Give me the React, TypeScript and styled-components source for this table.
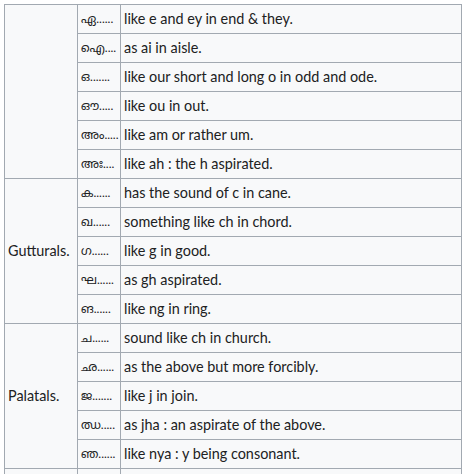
import React from 'react';
import styled, { createGlobalStyle } from 'styled-components';

type Row = { letter: string; sound: string };
type Group = { label: string; rows: Row[] };

const groups: Group[] = [
  {
    label: '',
    rows: [
      { letter: 'ഏ......', sound: 'like e and ey in end & they.' },
      { letter: 'ഐ....', sound: 'as ai in aisle.' },
      { letter: 'ഒ.......', sound: 'like our short and long o in odd and ode.' },
      { letter: 'ഔ.....', sound: 'like ou in out.' },
      { letter: 'അം.....', sound: 'like am or rather um.' },
      { letter: 'അഃ....', sound: 'like ah : the h aspirated.' },
    ],
  },
  {
    label: 'Gutturals.',
    rows: [
      { letter: 'ക......', sound: 'has the sound of c in cane.' },
      { letter: 'ഖ......', sound: 'something like ch in chord.' },
      { letter: 'ഗ......', sound: 'like g in good.' },
      { letter: 'ഘ......', sound: 'as gh aspirated.' },
      { letter: 'ങ......', sound: 'like ng in ring.' },
    ],
  },
  {
    label: 'Palatals.',
    rows: [
      { letter: 'ച......', sound: 'sound like ch in church.' },
      { letter: 'ഛ......', sound: 'as the above but more forcibly.' },
      { letter: 'ജ.......', sound: 'like j in join.' },
      { letter: 'ഝ.....', sound: 'as jha : an aspirate of the above.' },
      { letter: 'ഞ......', sound: 'like nya : y being consonant.' },
    ],
  },
];

const App = () => {
  return (
    <Page>
      <GlobalStyle />
      <Table>
        <colgroup>
          <Col $width={73} />
          <Col $width={43} />
          <Col $width={341} />
        </colgroup>
        <tbody>
          {groups.map((group) =>
            group.rows.map((row, i) => (
              <tr key={group.label + row.letter}>
                {i === 0 && <Cell rowSpan={group.rows.length}>{group.label}</Cell>}
                <LetterCell>{row.letter}</LetterCell>
                <Cell>{row.sound}</Cell>
              </tr>
            ))
          )}
          {/* next group starts just below the visible area */}
          <tr>
            <Cell />
            <LetterCell />
            <Cell />
          </tr>
        </tbody>
      </Table>
    </Page>
  );
};

const GlobalStyle = createGlobalStyle`
  html, body {
    margin: 0;
    overflow: hidden;
    background: #ffffff;
  }
`;

const Page = styled.div`
  padding: 4px;
`;

const Table = styled.table`
  border-collapse: collapse;
  table-layout: fixed;
  width: 458px;
  background: #f8f9fa;
  color: #202122;
  font-family: Lato, 'Noto Sans Malayalam', 'Noto Sans', sans-serif;
  font-size: 14.4px;
`;

const Col = styled.col<{ $width: number }>`
  width: ${(p) => p.$width}px;
`;

const Cell = styled.td`
  border: 1px solid #a2a9b1;
  height: 28px;
  padding: 0 3px;
  line-height: 22px;
  white-space: nowrap;
  overflow: hidden;
`;

const LetterCell = styled(Cell)`
  font-size: 12px;
`;

export default App;
